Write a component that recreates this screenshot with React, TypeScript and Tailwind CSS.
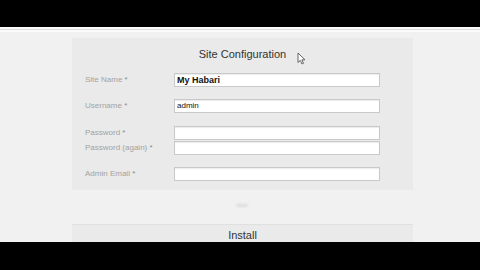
import React from "react";

const fields = [
  { label: "Site Name", value: "My Habari", bold: true, mt: "mt-[10px]" },
  { label: "Username", value: "admin", bold: false, mt: "mt-[12px]" },
  { label: "Password", value: "", bold: false, mt: "mt-[13px]" },
  { label: "Password (again)", value: "", bold: false, mt: "mt-[1px]" },
  { label: "Admin Email", value: "", bold: false, mt: "mt-[12px]" },
];

function Cursor() {
  return (
    <svg width="9" height="13" viewBox="0 0 9 13" className="absolute left-[297px] top-[25px]">
      <path d="M1 1 L1 10.5 L3.3 8.4 L5 12 L6.5 11.3 L4.9 7.8 L8 7.8 Z" fill="#fff" stroke="#555" strokeWidth="0.9" strokeLinejoin="round" />
    </svg>
  );
}

export default function App() {
  return (
    <div className="w-[480px] h-[270px] flex flex-col bg-black overflow-hidden" style={{ fontFamily: '"Liberation Sans", Arial, sans-serif' }}>
      <div className="h-[27px] bg-black" />
      <div className="flex-1 relative overflow-hidden bg-[#f1f1f1]">
        <div className="h-[2px] bg-[#fafafa]" />
        <div className="h-[1px] bg-[#dcdcdc]" />
        <div className="h-[2px] bg-[#fbfbfb]" />
        <div className="ml-[72px] w-[341px] mt-[6px] bg-[#eaeaea] pt-[7px] pb-[9px] pl-[13px]">
          <div className="h-[18px] leading-[18px] text-[11px] text-[#333] text-center pr-[13px]">Site Configuration</div>
          {fields.map((f) => (
            <div key={f.label} className={`flex items-center h-[14px] ${f.mt}`}>
              <div className="w-[89px] text-[8px] text-[#a2a2a2] whitespace-nowrap">
                {f.label} <span className="text-[#8a8a8a]">*</span>
              </div>
              <div className="w-[206px] h-[14px] bg-white border border-[#c9c9c9] shadow-[inset_0_1px_1px_rgba(0,0,0,0.08)] flex items-center px-[2px]">
                <span className={`text-[#111] leading-none ${f.bold ? "text-[9px] font-bold" : "text-[8px]"}`}>{f.value}</span>
              </div>
            </div>
          ))}
        </div>
        <div className="ml-[236px] mt-[14px] w-[12px] h-[3px] bg-[#dedede] rounded-full blur-[1px]" />
        <div className="ml-[72px] w-[341px] mt-[17px] h-[40px] bg-[#eaeaea] border-t border-[#e0e0e0]">
          <div className="text-center text-[11px] text-[#333] pt-[5px] leading-none">Install</div>
        </div>
        <Cursor />
      </div>
      <div className="h-[28px] bg-black" />
    </div>
  );
}
